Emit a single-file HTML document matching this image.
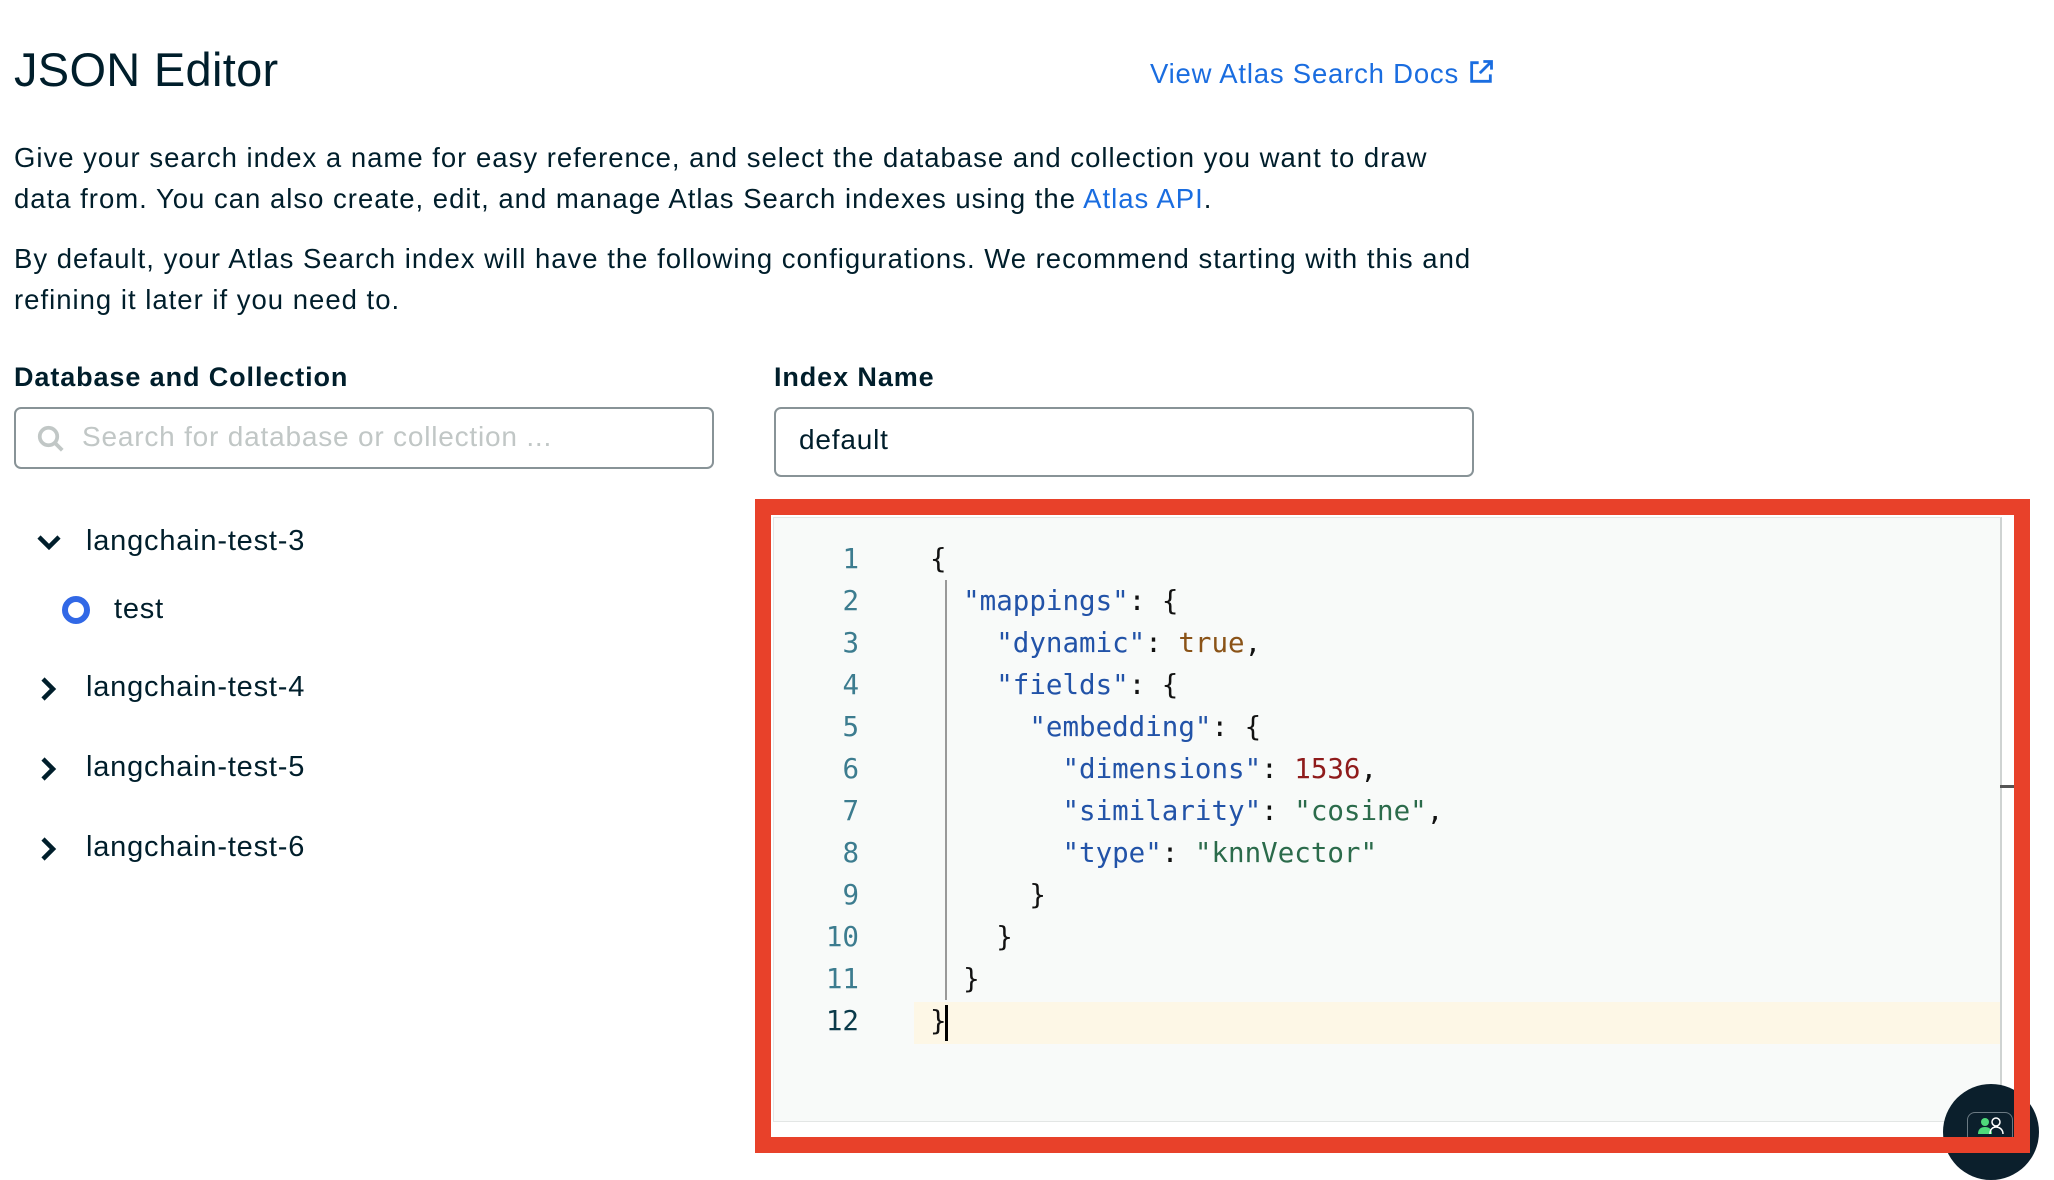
<!DOCTYPE html>
<html><head><meta charset="utf-8"><style>
body{margin:0;width:2054px;height:1160px;background:#fff;position:relative;overflow:hidden;font-family:"Liberation Sans",sans-serif;color:#001E2B}
.a{position:absolute;white-space:nowrap}
.p{font-size:27.5px;line-height:41px;letter-spacing:1px}
.k{color:#2253a8}.s{color:#2b6b4b}.b{color:#8a5317}.n{color:#8f1b1b}
.ln{position:absolute;width:80px;left:779px;text-align:right;color:#3c7c8f;font-family:"DejaVu Sans Mono",monospace;font-size:27.5px;line-height:42px}
.cl{position:absolute;left:930px;font-family:"DejaVu Sans Mono",monospace;font-size:27.5px;line-height:42px;white-space:pre;color:#111}
.t{font-size:29px;letter-spacing:0.8px}
</style></head><body>
<div class="a" style="left:14px;top:42px;font-size:47px;letter-spacing:0.3px">JSON Editor</div>
<div class="a" style="left:1150px;top:58px;font-size:27.5px;color:#1a6de0;letter-spacing:0.8px">View Atlas Search Docs
<svg width="28" height="28" viewBox="0 0 24 24" style="vertical-align:-3px" fill="none" stroke="#1a6de0" stroke-width="2.4"><path d="M10 4H4v16h16v-6"/><path d="M14 3h7v7M21 3L11 13"/></svg></div>
<div class="a p" style="left:14px;top:137px">Give your search index a name for easy reference, and select the database and collection you want to draw<br>data from. You can also create, edit, and manage Atlas Search indexes using the <span style="color:#1a6de0">Atlas API</span>.</div>
<div class="a p" style="left:14px;top:238px">By default, your Atlas Search index will have the following configurations. We recommend starting with this and<br>refining it later if you need to.</div>
<div class="a" style="left:14px;top:362px;font-size:27px;font-weight:bold;letter-spacing:0.9px">Database and Collection</div>
<div class="a" style="left:774px;top:362px;font-size:27px;font-weight:bold;letter-spacing:0.9px">Index Name</div>
<div class="a" style="left:14px;top:407px;width:696px;height:58px;border:2px solid #889397;border-radius:7px"></div>
<svg class="a" style="left:36px;top:424px" width="30" height="30" viewBox="0 0 24 24" fill="none" stroke="#c1c7c6" stroke-width="3"><circle cx="10" cy="10" r="7"/><path d="M15 15l6 6"/></svg>
<div class="a" style="left:82px;top:421px;font-size:28px;color:#c1c7c6;letter-spacing:0.8px">Search for database or collection ...</div>
<div class="a" style="left:774px;top:407px;width:696px;height:66px;border:2px solid #889397;border-radius:7px"></div>
<div class="a" style="left:799px;top:424px;font-size:28px;letter-spacing:0.8px">default</div>
<svg class="a" style="left:36px;top:532px" width="26" height="22" viewBox="0 0 26 22" fill="none" stroke="#001E2B" stroke-width="4.5"><path d="M3 5l10 10 10-10"/></svg>
<div class="a t" style="left:86px;top:525px">langchain-test-3</div>
<div class="a" style="left:62px;top:596px;width:16px;height:16px;border:6px solid #3168e6;border-radius:50%;background:#fff"></div>
<div class="a t" style="left:114px;top:593px">test</div>
<svg class="a" style="left:38px;top:676px" width="22" height="26" viewBox="0 0 22 26" fill="none" stroke="#001E2B" stroke-width="4.5"><path d="M5 3l10 10-10 10"/></svg>
<div class="a t" style="left:86px;top:671px">langchain-test-4</div>
<svg class="a" style="left:38px;top:756px" width="22" height="26" viewBox="0 0 22 26" fill="none" stroke="#001E2B" stroke-width="4.5"><path d="M5 3l10 10-10 10"/></svg>
<div class="a t" style="left:86px;top:751px">langchain-test-5</div>
<svg class="a" style="left:38px;top:836px" width="22" height="26" viewBox="0 0 22 26" fill="none" stroke="#001E2B" stroke-width="4.5"><path d="M5 3l10 10-10 10"/></svg>
<div class="a t" style="left:86px;top:831px">langchain-test-6</div>

<div class="a" style="left:773px;top:517px;width:1226px;height:603px;background:#f8faf9;border:1px solid #e3e6e5;border-right:2px solid #cfd3d2"></div>
<div class="a" style="left:914px;top:1002px;width:1086px;height:42px;background:#fdf7e6"></div>
<div class="a" style="left:945px;top:580px;width:2px;height:420px;background:#999"></div>
<div class="a" style="left:2000px;top:785px;width:15px;height:3px;background:#555"></div>
<div class="ln" style="top:538px">1</div><div class="ln" style="top:580px">2</div><div class="ln" style="top:622px">3</div><div class="ln" style="top:664px">4</div><div class="ln" style="top:706px">5</div><div class="ln" style="top:748px">6</div><div class="ln" style="top:790px">7</div><div class="ln" style="top:832px">8</div><div class="ln" style="top:874px">9</div><div class="ln" style="top:916px">10</div><div class="ln" style="top:958px">11</div><div class="ln" style="top:1000px;color:#0a3a4a">12</div>
<div class="cl" style="top:538px">{</div>
<div class="cl" style="top:580px">  <span class="k">"mappings"</span>: {</div>
<div class="cl" style="top:622px">    <span class="k">"dynamic"</span>: <span class="b">true</span>,</div>
<div class="cl" style="top:664px">    <span class="k">"fields"</span>: {</div>
<div class="cl" style="top:706px">      <span class="k">"embedding"</span>: {</div>
<div class="cl" style="top:748px">        <span class="k">"dimensions"</span>: <span class="n">1536</span>,</div>
<div class="cl" style="top:790px">        <span class="k">"similarity"</span>: <span class="s">"cosine"</span>,</div>
<div class="cl" style="top:832px">        <span class="k">"type"</span>: <span class="s">"knnVector"</span></div>
<div class="cl" style="top:874px">      }</div>
<div class="cl" style="top:916px">    }</div>
<div class="cl" style="top:958px">  }</div>
<div class="cl" style="top:1000px">}</div>
<div class="a" style="left:945px;top:1005px;width:3px;height:36px;background:#000"></div>
<div class="a" style="left:1943px;top:1084px;width:96px;height:96px;border-radius:50%;background:#0b1f2c"></div>
<div class="a" style="left:1967px;top:1112px;width:44px;height:30px;border:1.5px solid #6b7a83;border-radius:8px"></div>
<svg class="a" style="left:1977px;top:1116px" width="28" height="20" viewBox="0 0 28 20"><circle cx="8" cy="6" r="4" fill="#4fd97a"/><path d="M1 18c0-5 3-7 7-7s7 2 7 7z" fill="#4fd97a"/><circle cx="19" cy="6" r="4" fill="none" stroke="#fff" stroke-width="1.5"/><path d="M13 18c0-5 3-7 6-7s7 2 7 7" fill="none" stroke="#fff" stroke-width="1.5"/></svg>
<div class="a" style="left:755px;top:499px;width:1243px;height:622px;border:16px solid #e8412a"></div>
</body></html>
